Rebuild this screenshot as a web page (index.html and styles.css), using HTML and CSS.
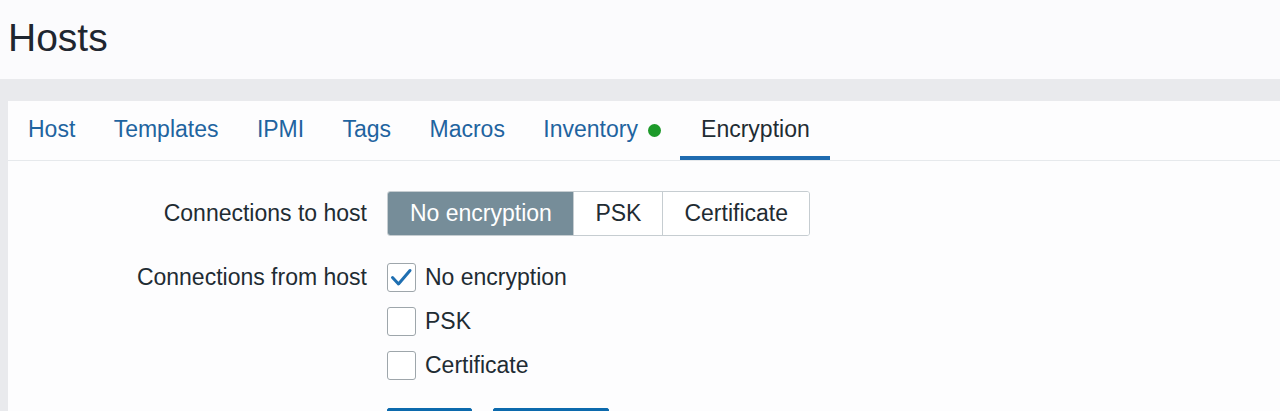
FILE: index.html
```html
<!DOCTYPE html>
<html>
<head>
<meta charset="utf-8">
<link rel="stylesheet" href="styles.css">
</head>
<body>
<header class="page-header">
  <h1 class="page-title">Hosts</h1>
</header>
<main class="wrapper">
  <section class="card">
    <nav class="tabs">
      <a class="tab">Host</a>
      <a class="tab">Templates</a>
      <a class="tab">IPMI</a>
      <a class="tab">Tags</a>
      <a class="tab">Macros</a>
      <a class="tab">Inventory <span class="dot"></span></a>
      <a class="tab active">Encryption</a>
    </nav>
    <form class="form">
      <div class="row">
        <div class="label">Connections to host</div>
        <div class="field">
          <div class="radio-group">
            <span class="seg selected">No encryption</span>
            <span class="seg">PSK</span>
            <span class="seg">Certificate</span>
          </div>
        </div>
      </div>
      <div class="row row-checks">
        <div class="label label-tall">Connections from host</div>
        <div class="field">
          <ul class="checks">
            <li class="check-item"><span class="box checked"><svg viewBox="0 0 29 29" width="29" height="29"><path d="M5.5 14.5 L11.5 21 L23 7.5" fill="none" stroke="#1f6fb1" stroke-width="3" stroke-linecap="round" stroke-linejoin="round"/></svg></span>No encryption</li>
            <li class="check-item"><span class="box"></span>PSK</li>
            <li class="check-item"><span class="box"></span>Certificate</li>
          </ul>
        </div>
      </div>
      <div class="row row-buttons">
        <div class="label"></div>
        <div class="field buttons">
          <button type="button" class="btn">Add</button>
          <button type="button" class="btn">Cancel</button>
        </div>
      </div>
    </form>
  </section>
</main>
</body>
</html>
```

FILE: styles.css
```css
html, body {
  margin: 0;
  padding: 0;
}
body {
  font-family: "Liberation Sans", Arial, sans-serif;
  background: #e9eaed;
  color: #1f2c33;
  overflow: hidden;
  height: 411px;
}
.page-header {
  background: #fbfbfd;
  height: 79px;
  padding: 0 8px;
  box-sizing: border-box;
}
.page-title {
  margin: 0;
  padding-top: 15px;
  font-size: 39px;
  font-weight: normal;
  line-height: 45px;
  color: #1f2630;
}
.wrapper {
  padding: 22px 0 0 8px;
}
.card {
  background: #fdfdfe;
  height: 400px;
}
.tabs {
  display: flex;
  border-bottom: 1px solid #e6e9ec;
  height: 59px;
}
.tab {
  display: flex;
  align-items: center;
  padding: 0 19.2px;
  height: 53px;
  padding-top: 2px;
  font-size: 23px;
  color: #1f64a0;
  border-bottom: 4px solid transparent;
  box-sizing: content-box;
}
.tab:first-child {
  padding-left: 20px;
}
.tab.active {
  color: #1f2c33;
  border-bottom-color: #1f6bb0;
  padding-left: 21px;
  padding-right: 20px;
}
.dot {
  display: inline-block;
  width: 13px;
  height: 13px;
  border-radius: 50%;
  background: #1d9a2a;
  margin-left: 10px;
  margin-top: 2px;
}
.form {
  padding-top: 30px;
  font-size: 23px;
  color: #1f2c33;
}
.row {
  display: flex;
  gap: 20px;
}
.label {
  width: 359px;
  text-align: right;
  line-height: 45px;
  flex: none;
}
.label-tall {
  line-height: 44px;
}
.radio-group {
  display: flex;
  border: 1px solid #c6cdd1;
  border-radius: 3px;
  height: 43px;
  overflow: hidden;
}
.seg {
  line-height: 43px;
  padding: 0 21px;
  background: #fff;
  border-left: 1px solid #c6cdd1;
}
.seg:first-child {
  border-left: none;
  padding: 0 21.5px 0 22px;
}
.seg.selected {
  background: #768d99;
  color: #fff;
}
.row-checks {
  margin-top: 19px;
}
.checks {
  list-style: none;
  margin: 0;
  padding: 0;
}
.check-item {
  display: flex;
  align-items: center;
  height: 44px;
}
.box {
  width: 29px;
  height: 29px;
  box-sizing: border-box;
  border: 1px solid #9ea6ab;
  border-radius: 3px;
  background: #fff;
  margin-right: 9px;
  position: relative;
}
.box svg {
  position: absolute;
  left: -1px;
  top: -1px;
}
.row-buttons {
  margin-top: 21px;
}
.buttons {
  display: flex;
  gap: 21px;
}
.btn {
  font-family: inherit;
  font-size: 23px;
  padding: 0 21px;
  height: 44px;
  background: #0c6aad;
  color: #fff;
  border: 1px solid #0c6aad;
  border-radius: 2px;
}
```
